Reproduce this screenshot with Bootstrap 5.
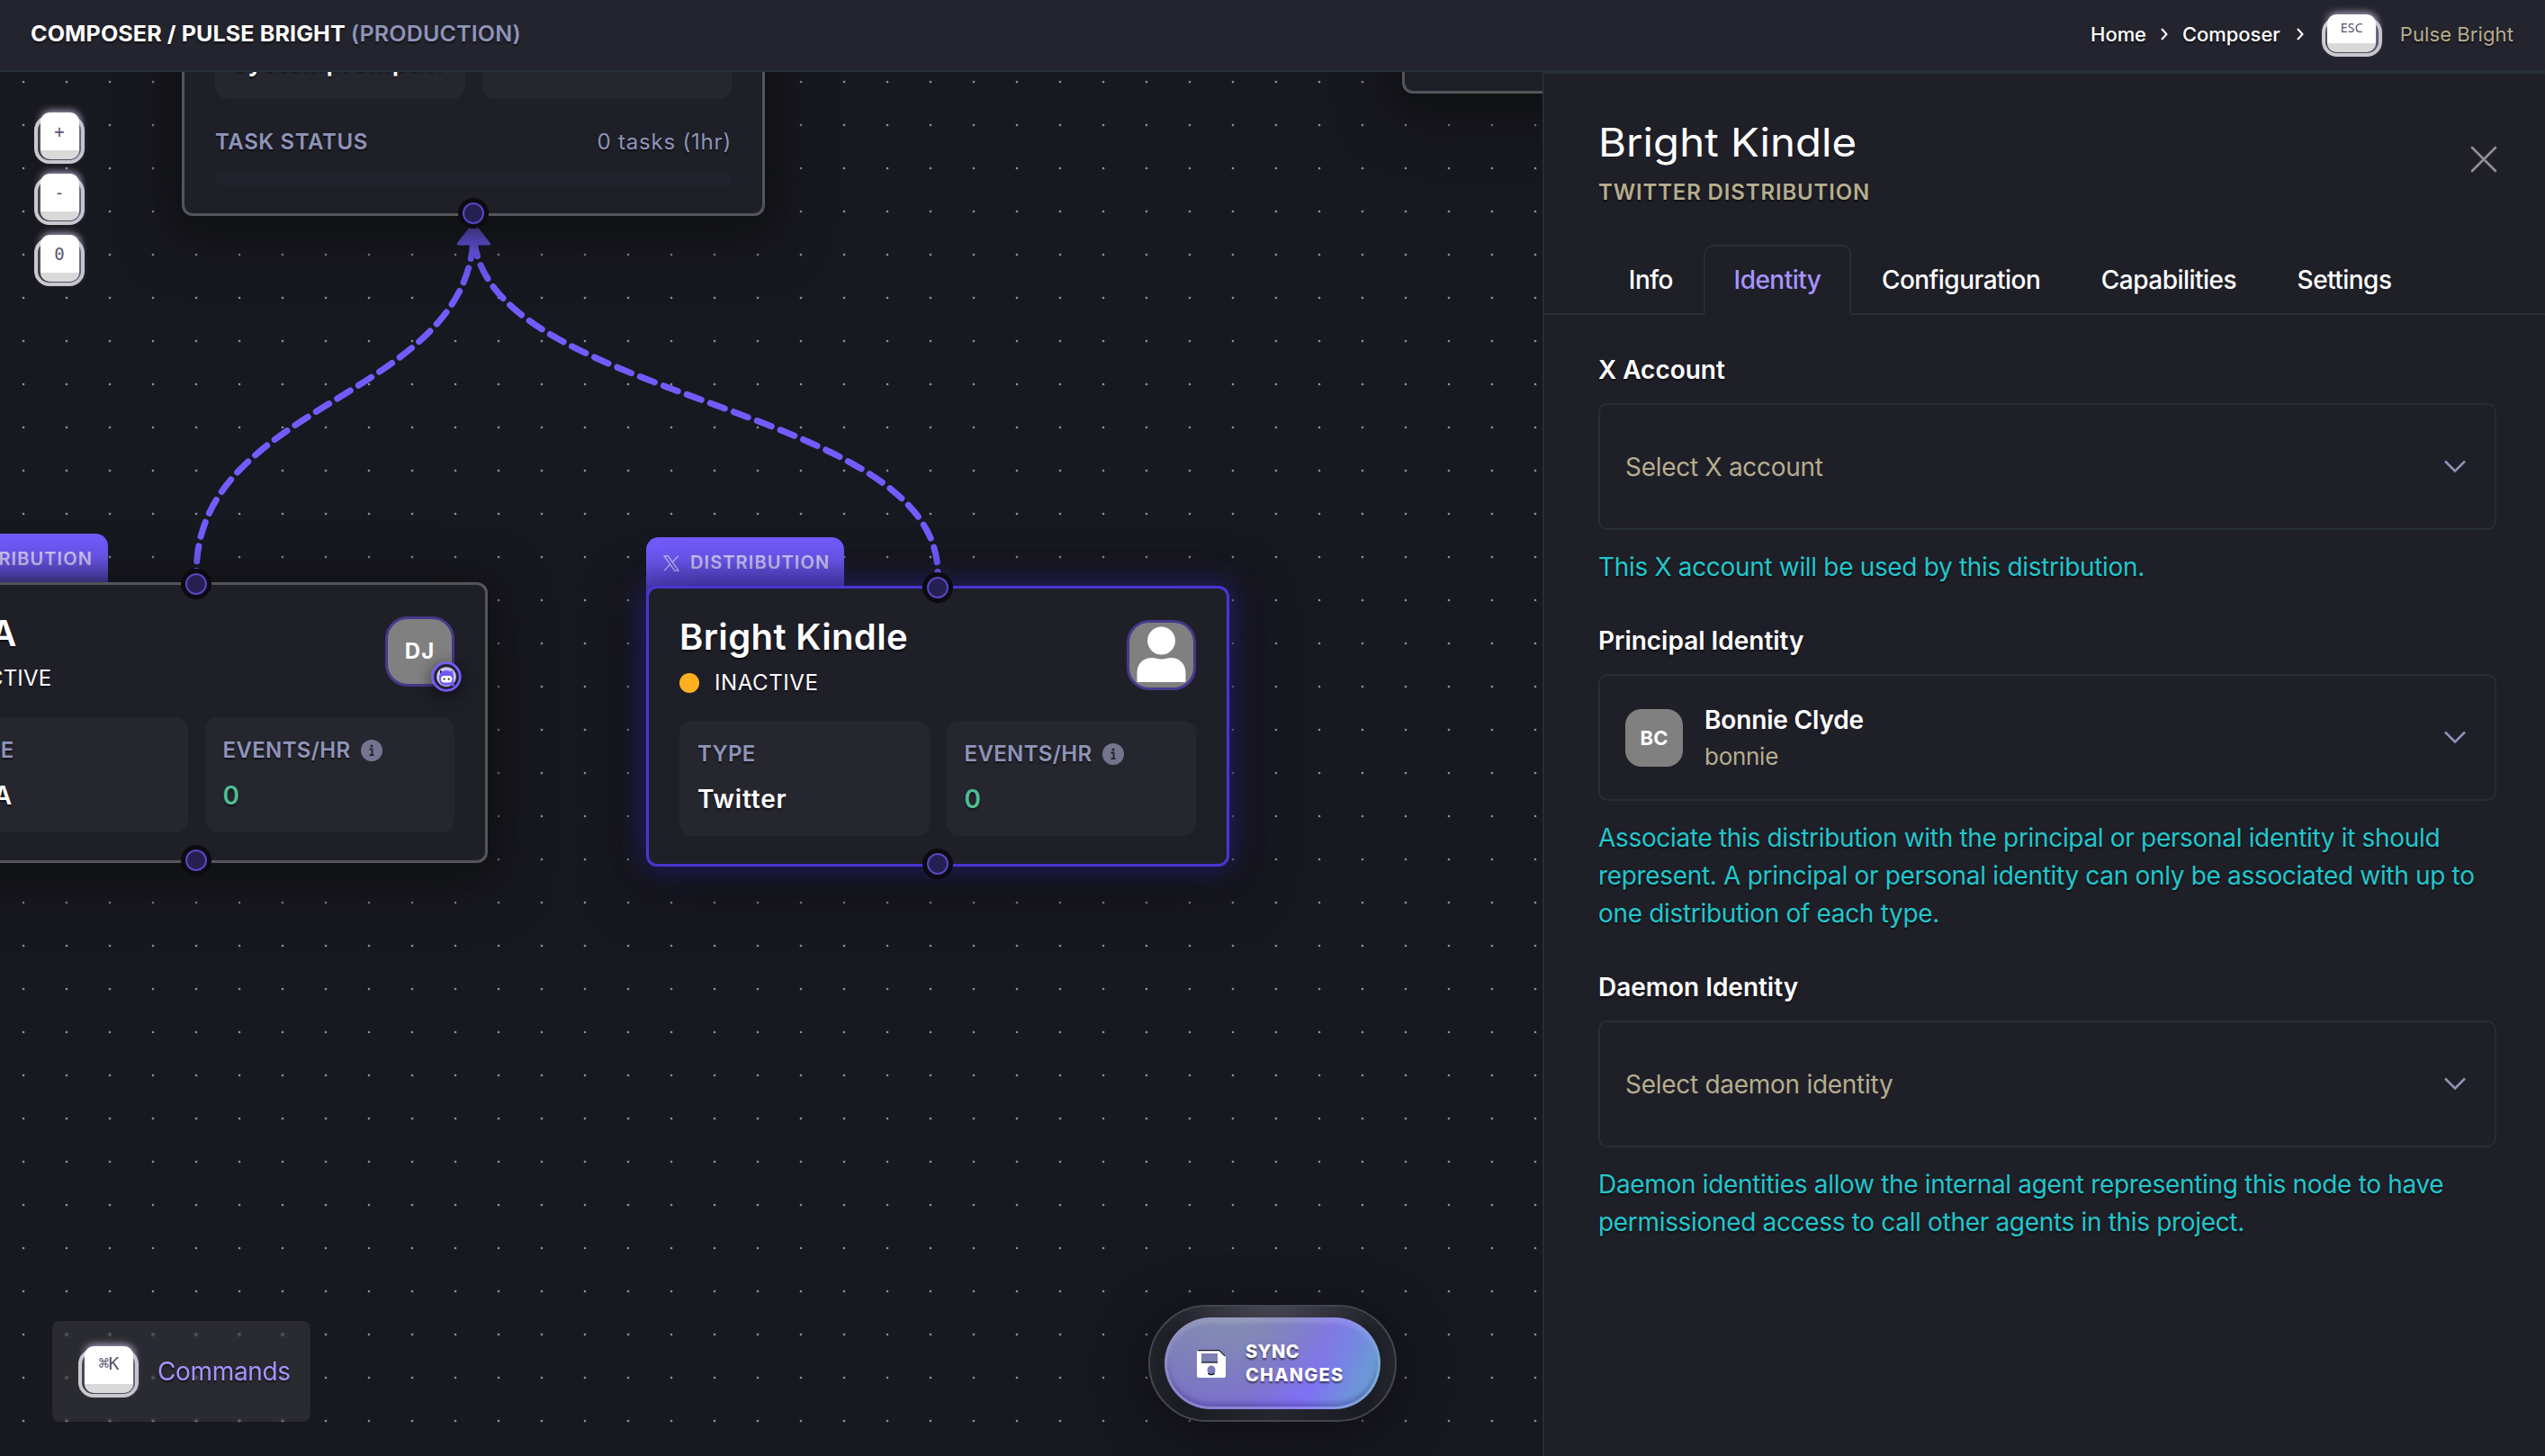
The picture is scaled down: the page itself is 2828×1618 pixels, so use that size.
<!DOCTYPE html>
<html lang="en" data-bs-theme="dark">
<head>
<meta charset="utf-8">
<meta name="viewport" content="width=device-width, initial-scale=1">
<title>Composer / Pulse Bright</title>
<link href="https://cdn.jsdelivr.net/npm/bootstrap@5.3.0/dist/css/bootstrap.min.css" rel="stylesheet">
<style>
:root{--line:#262e36;--panel:#1f1f28;--accent:#735cff;--sand:#b5ad8e;--slate:#8f94b8;--lilac:#a594ff}
html,body{height:100%}
body{font-family:Inter,"Liberation Sans",sans-serif;font-size:28px;line-height:42px;background:#181820;color:#fff;overflow:hidden;text-shadow:0 2px 2px rgba(0,0,0,.55)}
svg{display:block;flex:none}
.topbar{height:80px;background:#24242e;border-bottom:2px solid var(--line);padding:0 35px 2px 34px}
.topbar-title{font-size:24px;font-weight:700;letter-spacing:.1px;color:#fff;transform:scaleX(1.045);transform-origin:0 50%}
.topbar-title span{color:var(--slate);font-weight:600}
.crumbs{font-size:22px;font-weight:500;line-height:30px}
.crumbs a{color:#fff;text-decoration:none;letter-spacing:-.05px}
.crumbs .here{color:var(--sand);font-weight:400;letter-spacing:.1px}

/* keyboard keys */
.keycap{position:relative;display:block;width:67px;height:44px;border:4px solid #c9c9c9;border-radius:17px;background:#1d1d27;text-shadow:none;flex:none}
.keycap::before{content:"";position:absolute;left:2.5px;right:2.5px;top:-7px;bottom:1px;border-radius:10px;background:#fff;border-bottom:10px solid #d9d9d9;box-shadow:0 -2px 8px rgba(235,230,255,.6),4px 0 6px rgba(160,160,220,.35)}
.keycap kbd{position:absolute;inset:-7px 0 auto 0;height:30px;display:flex;align-items:center;justify-content:center;background:none;padding:0;color:#55556f;font:400 14px/30px "Noto Sans",sans-serif;letter-spacing:.3px}
.keycap.k-cmd{height:54px;margin-top:1px}
.keycap.k-cmd kbd{height:39px;font:400 20px/39px "DejaVu Sans Mono",monospace;letter-spacing:-1px}
.keycap.k-sq{width:56px;height:54px}
.keycap.k-sq kbd{height:42px;font:400 19px/42px "DejaVu Sans Mono",monospace}
.zoomkeys{position:absolute;left:38px;top:48px;gap:14px}

.board{position:relative;overflow:hidden;background:#181820 radial-gradient(circle at 24px 24px,#8c8c92 0,#8c8c92 1px,transparent 1.7px) 2px -13px/48px 48px}
.edges{position:absolute;left:0;top:0}
.flow-node{position:absolute;width:648px}
.nodebox{position:relative;background:var(--panel);border:3px solid #54555a;border-radius:12px;padding:30px 34px 31px;box-shadow:0 16px 64px 8px rgba(14,16,16,.8),0 4px 24px rgba(14,16,16,.5)}
.nodebox.picked{border:3px solid #4b36d0;box-shadow:0 0 32px 2px rgba(58,40,200,.5),0 16px 64px 8px rgba(14,16,16,.75)}
.node-tab{position:absolute;left:0;top:-54px;height:74px;width:220px;border-radius:14px 14px 0 0;background:linear-gradient(#735cff,#6f59f6 25px,#5846c6 56px);padding:13px 17px 0 19px;font-size:20px;font-weight:600;line-height:30px;letter-spacing:1.1px;color:rgba(255,255,255,.7);text-shadow:none;gap:12px}
.node-head{height:117px}
.node-name{font-size:40px;font-weight:600;line-height:48px;letter-spacing:.36px;margin:0;padding-top:0}
.node-state{font-size:24px;line-height:30px;letter-spacing:.6px;margin-top:11.5px;gap:17px}
.dot{width:22px;height:22px;border-radius:50%;background:#ffb020}
.pic{position:relative;width:77px;height:78px;margin-top:5px;border-radius:25px;border:3px solid #453a8c;background:#808080;font-size:24px;font-weight:700;letter-spacing:1px;text-shadow:none}
.pic-bot{position:absolute;left:48px;top:47px;border-radius:50%;box-shadow:0 4px 18px rgba(0,0,0,.6)}
.stat{flex:1 1 0;height:128px;border-radius:14px;background:#26262f;padding:19px 20px}
.stat-k{font-size:24px;font-weight:600;line-height:36px;letter-spacing:.35px;color:var(--slate);gap:11px}
.stat-v{font-size:28px;font-weight:600;line-height:36px;margin-top:14px;letter-spacing:.8px}
.stat-v.good{color:#4fbe93}
.port{position:absolute;left:50%;width:24px;height:24px;margin-left:-12px;border-radius:50%;background:#262052;border:2.5px solid #5846c4;box-shadow:0 0 0 5px #0b0b10}
.port-in{top:-10px}
.port-out{bottom:-9px}
.taskrow{line-height:36px;font-size:24px;color:var(--slate)}
.taskbar{height:14px;border-radius:7px;background:#23232d;margin-top:16px}

.cmdbar{position:absolute;left:58px;top:1388px;width:287px;height:112px;border-radius:8px;background:rgba(255,255,255,.08);backdrop-filter:blur(1px);padding:0 0 0 29px;gap:21px;color:var(--lilac);letter-spacing:-.35px}
.sync{position:absolute;left:1276px;top:1370px;width:276px;height:130px;border-radius:65px;border:2px solid #44444d;background:radial-gradient(ellipse 55% 40% at 50% 0,rgba(120,120,135,.4),transparent),linear-gradient(90deg,#22222b,#1b1b23 12%,#262630 50%,#1b1b23 88%,#25252e);box-shadow:0 10px 60px rgba(12,13,16,.85)}
.sync-face{width:240px;height:102px;border-radius:51px;border:3px solid rgba(255,255,255,.12);background:radial-gradient(ellipse 62% 95% at 32% 0,rgba(134,148,172,.85),rgba(134,148,172,0)),linear-gradient(110deg,#7b76bd 0,#7c6fd0 45%,#8070f4 68%,#6f92da 86%,#62a9cc 100%);background-origin:border-box;box-shadow:inset 0 3px 4px rgba(255,255,255,.16),inset 0 -4px 5px rgba(60,50,140,.4);gap:22px;padding-left:33px;font-size:20px;font-weight:800;line-height:26px;color:#fff}
.sync-face b{display:block;font-weight:800;letter-spacing:1.2px}
.sync-face b:first-child{letter-spacing:.4px}

.inspector{width:1114px;flex:none;background:var(--panel);border-left:2px solid var(--line);border-top:2px solid var(--line);padding-top:48px}
.insp-head{padding:0 53px 0 60px;height:142px}
.insp-title{font-size:44px;line-height:56px;font-weight:400;margin:0 0 12px;text-shadow:none;transform:scaleX(1.077);transform-origin:0 50%}
.insp-sub{font-size:24px;line-height:30px;font-weight:600;letter-spacing:.84px;color:var(--sand);padding-top:1px}
.nav-tabs.insp-tabs{border-bottom:2px solid var(--line);padding-left:60px;height:78px;flex-wrap:nowrap}
.insp-tabs .nav-link{font-weight:500;letter-spacing:-.53px;color:#fff;border-width:2px;padding:16px 31.8px;margin-bottom:-2px;height:78px;border-radius:10px 10px 0 0;text-shadow:none}
.insp-tabs .nav-link.active{color:var(--lilac);background:var(--panel);border-color:var(--line) var(--line) var(--panel)}
.insp-body{padding:40px 54px 0 60px}
.field{margin-bottom:40px}
.field-label{font-weight:600;letter-spacing:-.02px;margin-bottom:16px;display:block}
.picker{height:141px;border:2px solid var(--line);border-radius:10px;padding:0 31px 0 28px;color:var(--sand);letter-spacing:-.28px;text-shadow:none}
.help{color:#22c7cc;letter-spacing:-.325px;margin:20px 0 0;white-space:nowrap}
.who{width:64px;height:64px;border-radius:18px;background:#808080;color:#fff;font-size:22px;font-weight:700;letter-spacing:0;margin-right:24px}
.who-name{color:#fff;font-weight:600;line-height:41px;letter-spacing:-.16px;padding-top:1px}
.who-id{font-size:26px;line-height:40px}
</style>
<script src="https://cdn.jsdelivr.net/npm/bootstrap@5.3.0/dist/js/bootstrap.bundle.min.js"></script>
</head>
<body class="d-flex flex-column">

<header class="topbar d-flex align-items-center justify-content-between flex-shrink-0">
  <div class="topbar-title">COMPOSER / PULSE BRIGHT <span>(PRODUCTION)</span></div>
  <nav class="crumbs d-flex align-items-center">
    <a href="#">Home</a>
    <svg width="8" height="14" viewBox="0 0 8 14" class="mx-3" fill="none" stroke="#fff" stroke-width="2"><path d="M1 1l5.500 6L1 13"/></svg>
    <a href="#">Composer</a>
    <svg width="8" height="14" viewBox="0 0 8 14" fill="none" stroke="#fff" stroke-width="2" style="margin:0 20px 0 18px"><path d="M1 1l5.500 6L1 13"/></svg>
    <span class="keycap" style="margin-top:6px"><kbd>ESC</kbd></span>
    <span class="here" style="margin-left:20px">Pulse Bright</span>
  </nav>
</header>

<div class="d-flex flex-grow-1" style="min-height:0">
  <main class="board flex-grow-1">
    <svg class="edges" width="1714" height="1538" viewBox="0 80 1714 1538">
      <g fill="none" stroke="#735cff" stroke-width="7" stroke-linecap="round" stroke-dasharray="17 10.700" stroke-dashoffset="15.500">
        <path d="M218.300 636C218.300 444 526.300 444 526.300 256"/>
        <path d="M1042 637C1042 446 526.300 446 526.300 256"/>
      </g>
      <path d="M526.300 249L543.500 271H509.200Z" fill="#735cff" stroke="#735cff" stroke-width="3" stroke-linejoin="round"/>
    </svg>

    <section class="flow-node" style="left:202px;top:-184px">
      <div class="nodebox">
        <div class="node-head"></div>
        <div class="d-flex" style="gap:19px;margin-top:-82px">
          <div class="stat" style="height:146px;padding-top:87px"><div class="stat-v m-0">systemprompt...</div></div>
          <div class="stat" style="height:146px"></div>
        </div>
        <div class="taskrow d-flex justify-content-between" style="margin-top:30px">
          <span style="font-weight:600;letter-spacing:.6px">TASK STATUS</span><span style="letter-spacing:.8px">0 tasks (1hr)</span>
        </div>
        <div class="taskbar"></div>
      </div>
      <i class="port port-out"></i>
    </section>

    <section class="flow-node" style="left:1558px;top:-200px">
      <div class="nodebox" style="height:224px"></div>
    </section>

    <section class="flow-node" style="left:-106px;top:566.500px">
      <div class="node-tab d-flex justify-content-end" style="width:226px">DISTRIBUTION</div>
      <div class="nodebox">
        <div class="node-head d-flex justify-content-between">
          <div>
            <h2 class="node-name">Q&amp;A</h2>
            <div class="node-state d-flex align-items-center" style="letter-spacing:.2px"><i class="dot"></i>ACTIVE</div>
          </div>
          <div class="pic d-flex align-items-center justify-content-center">DJ
            <svg class="pic-bot" width="34" height="34" viewBox="0 0 34 34"><circle cx="17" cy="17" r="15.300" fill="#24232f" stroke="#735cff" stroke-width="2.800"/><circle cx="17" cy="17" r="10.800" fill="#c9c2f3"/><path d="M10 9.500l5 4-5 3z" fill="#1d1a3a"/><path d="M24 9.500l1 8-7-4z" fill="#7a63ff"/><path d="M9 17a8 7 0 0 1 16 0v7l1.500 4-5-1.500h-7A7 7 0 0 1 9 20z" fill="#6f5af5"/><rect x="11" y="16" width="12.500" height="7.500" rx="3.700" fill="#fff"/><circle cx="14.500" cy="19.600" r="1.100" fill="#222"/><circle cx="19.800" cy="19.600" r="1.100" fill="#222"/></svg>
          </div>
        </div>
        <div class="d-flex" style="gap:19px">
          <div class="stat"><div class="stat-k">TYPE</div><div class="stat-v">Q&amp;A</div></div>
          <div class="stat"><div class="stat-k d-flex align-items-center">EVENTS/HR
            <svg width="24" height="24" viewBox="0 0 24 24"><circle cx="12" cy="12" r="12" fill="#73758f"/><circle cx="12" cy="7" r="1.600" fill="#26262f"/><path d="M9.500 10.500h3v6.500h2M9.500 17h5" stroke="#26262f" stroke-width="1.900" fill="none"/></svg></div><div class="stat-v good">0</div></div>
        </div>
      </div>
      <i class="port port-in"></i><i class="port port-out"></i>
    </section>

    <section class="flow-node" style="left:718px;top:571px">
      <div class="node-tab d-flex">
        <svg width="18" height="18" viewBox="0 0 18 18" fill="none" stroke="#cdc7f6" stroke-width="1.200" style="margin-top:6.500px"><path d="M1 .8h4.300L17 17.200h-4.300zM16.600.8L9.900 8.200M1 17.200l6.800-7.400"/></svg>
        <span>DISTRIBUTION</span></div>
      <div class="nodebox picked">
        <div class="node-head d-flex justify-content-between">
          <div>
            <h2 class="node-name">Bright Kindle</h2>
            <div class="node-state d-flex align-items-center"><i class="dot"></i>INACTIVE</div>
          </div>
          <div class="pic"><svg width="71" height="72" viewBox="0 0 71 72" fill="#fff"><circle cx="35.500" cy="20" r="15.400"/><path d="M8.500 66V56C8.500 45 16 39 25 39c4 0 6 1.500 10.500 1.500S42 39 46 39c9 0 16.500 6 16.500 17v10z"/></svg></div>
        </div>
        <div class="d-flex" style="gap:19px">
          <div class="stat"><div class="stat-k">TYPE</div><div class="stat-v">Twitter</div></div>
          <div class="stat"><div class="stat-k d-flex align-items-center">EVENTS/HR
            <svg width="24" height="24" viewBox="0 0 24 24"><circle cx="12" cy="12" r="12" fill="#73758f"/><circle cx="12" cy="7" r="1.600" fill="#26262f"/><path d="M9.500 10.500h3v6.500h2M9.500 17h5" stroke="#26262f" stroke-width="1.900" fill="none"/></svg></div><div class="stat-v good">0</div></div>
        </div>
      </div>
      <i class="port port-in"></i><i class="port port-out"></i>
    </section>

    <div class="zoomkeys d-flex flex-column">
      <span class="keycap k-sq"><kbd>+</kbd></span>
      <span class="keycap k-sq"><kbd>-</kbd></span>
      <span class="keycap k-sq"><kbd>0</kbd></span>
    </div>

    <div class="cmdbar d-flex align-items-center">
      <span class="keycap k-cmd" style="margin-top:4px"><kbd>⌘K</kbd></span><span>Commands</span>
    </div>

    <div class="sync d-flex align-items-center justify-content-center">
      <div class="sync-face d-flex align-items-center">
        <svg width="32" height="31" viewBox="0 0 32 31"><path d="M2.500 0H25l7 7v21.500a2.500 2.500 0 0 1-2.500 2.500h-27A2.500 2.500 0 0 1 0 28.500v-26A2.500 2.500 0 0 1 2.500 0z" fill="#fff"/><path d="M1 1.200Q1.500.6 2.500.6H24.800l6.600 6.600" fill="none" stroke="#15151c" stroke-width="1.200"/><path d="M5 4h18v10H5z" fill="#7d80b4"/><path d="M5 14h18" stroke="#15151c" stroke-width="1.300"/><ellipse cx="16" cy="22.500" rx="4.500" ry="5" fill="#7d7bbb"/><path d="M12.500 26a4.500 4.500 0 0 0 7 0" fill="none" stroke="#15151c" stroke-width="1.300"/></svg>
        <div><b>SYNC</b><b>CHANGES</b></div>
      </div>
    </div>
  </main>

  <aside class="inspector">
    <div class="insp-head d-flex justify-content-between">
      <div>
        <h1 class="insp-title">Bright Kindle</h1>
        <div class="insp-sub">TWITTER DISTRIBUTION</div>
      </div>
      <svg width="30" height="30" viewBox="0 0 30 30" fill="none" stroke="#909094" stroke-width="2.600" stroke-linecap="round" style="margin-top:32px"><path d="M2 2l26 26M28 2L2 28"/></svg>
    </div>
    <ul class="nav nav-tabs insp-tabs">
      <li class="nav-item"><a class="nav-link" href="#">Info</a></li>
      <li class="nav-item"><a class="nav-link active" href="#">Identity</a></li>
      <li class="nav-item"><a class="nav-link" href="#">Configuration</a></li>
      <li class="nav-item"><a class="nav-link" href="#">Capabilities</a></li>
      <li class="nav-item"><a class="nav-link" href="#">Settings</a></li>
    </ul>
    <div class="insp-body">
      <div class="field">
        <span class="field-label">X Account</span>
        <div class="picker d-flex align-items-center justify-content-between"><span>Select X account</span>
          <svg width="26" height="15" viewBox="0 0 26 15" fill="none" stroke="#8f94b8" stroke-width="2.500"><path d="M2 1.500l11 11 11-11"/></svg></div>
        <p class="help">This X account will be used by this distribution.</p>
      </div>
      <div class="field">
        <span class="field-label">Principal Identity</span>
        <div class="picker d-flex align-items-center justify-content-between">
          <div class="d-flex align-items-center">
            <span class="who d-flex align-items-center justify-content-center">BC</span>
            <div><div class="who-name">Bonnie Clyde</div><div class="who-id">bonnie</div></div>
          </div>
          <svg width="26" height="15" viewBox="0 0 26 15" fill="none" stroke="#8f94b8" stroke-width="2.500"><path d="M2 1.500l11 11 11-11"/></svg></div>
        <p class="help">Associate this distribution with the principal or personal identity it should<br>represent. A principal or personal identity can only be associated with up to<br>one distribution of each type.</p>
      </div>
      <div class="field">
        <span class="field-label">Daemon Identity</span>
        <div class="picker d-flex align-items-center justify-content-between"><span>Select daemon identity</span>
          <svg width="26" height="15" viewBox="0 0 26 15" fill="none" stroke="#8f94b8" stroke-width="2.500"><path d="M2 1.500l11 11 11-11"/></svg></div>
        <p class="help">Daemon identities allow the internal agent representing this node to have<br>permissioned access to call other agents in this project.</p>
      </div>
    </div>
  </aside>
</div>
</body>
</html>
